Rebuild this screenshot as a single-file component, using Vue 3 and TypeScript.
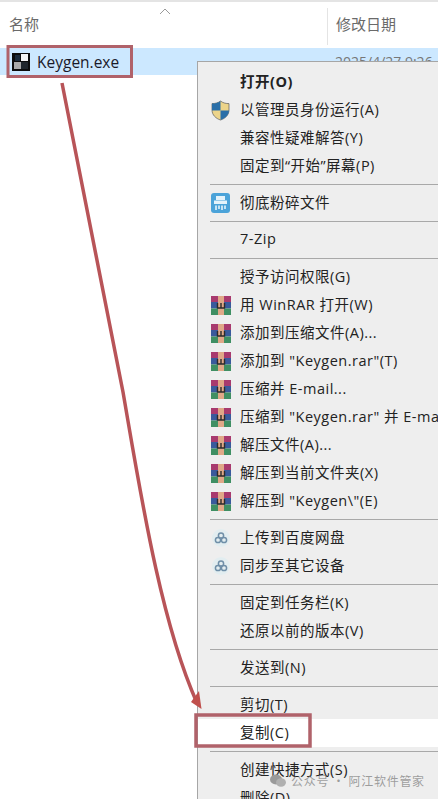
<script setup lang="ts">
type Icon = 'shield' | 'shred' | 'rar' | 'cloud' | ''

interface Row {
  label?: string
  icon?: Icon
  bold?: boolean
  active?: boolean
  sep?: boolean
}

const rows: Row[] = [
  { label: '打开(O)', bold: true },
  { label: '以管理员身份运行(A)', icon: 'shield' },
  { label: '兼容性疑难解答(Y)' },
  { label: '固定到“开始”屏幕(P)' },
  { sep: true },
  { label: '彻底粉碎文件', icon: 'shred' },
  { sep: true },
  { label: '7-Zip' },
  { sep: true },
  { label: '授予访问权限(G)' },
  { label: '用 WinRAR 打开(W)', icon: 'rar' },
  { label: '添加到压缩文件(A)...', icon: 'rar' },
  { label: '添加到 "Keygen.rar"(T)', icon: 'rar' },
  { label: '压缩并 E-mail...', icon: 'rar' },
  { label: '压缩到 "Keygen.rar" 并 E-mail', icon: 'rar' },
  { label: '解压文件(A)...', icon: 'rar' },
  { label: '解压到当前文件夹(X)', icon: 'rar' },
  { label: '解压到 "Keygen\\"(E)', icon: 'rar' },
  { sep: true },
  { label: '上传到百度网盘', icon: 'cloud' },
  { label: '同步至其它设备', icon: 'cloud' },
  { sep: true },
  { label: '固定到任务栏(K)' },
  { label: '还原以前的版本(V)' },
  { sep: true },
  { label: '发送到(N)' },
  { sep: true },
  { label: '剪切(T)' },
  { label: '复制(C)', active: true },
  { sep: true },
  { label: '创建快捷方式(S)' },
  { label: '删除(D)' },
]
</script>

<template>
  <div class="screen">
    <div class="topline"></div>
    <div class="header">
      <div class="col-name">
        <span>名称</span>
        <svg class="sort" width="12" height="7" viewBox="0 0 12 7">
          <path d="M1 6 L6 1 L11 6" fill="none" stroke="#9a9a9a" stroke-width="1" />
        </svg>
      </div>
      <div class="col-date">修改日期</div>
    </div>

    <div class="file-row">
      <svg class="exe" width="18" height="18" viewBox="0 0 18 18">
        <rect width="18" height="18" fill="#0c0c0c" />
        <rect x="9" y="1" width="7" height="7" fill="#f4f4f4" />
        <rect x="2" y="9" width="7" height="7" fill="#a9a9a9" />
        <rect x="9" y="9" width="7" height="7" fill="#20262c" />
        <rect x="3" y="2" width="5" height="6" fill="#1a2a3a" />
      </svg>
      <span class="file-name">Keygen.exe</span>
      <span class="file-date">2025/4/27 9:26</span>
    </div>

    <div class="menu">
      <template v-for="(row, i) in rows" :key="i">
        <div v-if="row.sep" class="sep"></div>
        <div v-else class="item" :class="{ bold: row.bold, active: row.active }">
          <span class="icon">
            <svg v-if="row.icon === 'shield'" width="19" height="21" viewBox="0 0 19 21">
              <path d="M9.5 1 C7 3 4 3.6 1 3.6 L1 10 C1 15 5 18.6 9.5 20 C14 18.6 18 15 18 10 L18 3.6 C15 3.6 12 3 9.5 1 Z" fill="#ecd48a" stroke="#5a5a5a" stroke-width="0.7" />
              <path d="M9.5 1 C7 3 4 3.6 1 3.6 L1 10.5 L9.5 10.5 Z" fill="#2a6fa8" />
              <path d="M9.5 10.5 L18 10.5 C18 15 14 18.6 9.5 20 Z" fill="#2a6fa8" />
            </svg>
            <svg v-else-if="row.icon === 'shred'" width="20" height="20" viewBox="0 0 20 20">
              <rect width="19" height="20" rx="3" fill="#4ba3d9" />
              <rect x="5" y="3" width="9" height="4" fill="#e4f3fb" />
              <rect x="3" y="7.5" width="13" height="3.5" fill="#e4f3fb" />
              <path d="M5 12.5 V17 M8 12.5 V16 M11 12.5 V17 M14 12.5 V16" stroke="#e4f3fb" stroke-width="1.6" />
            </svg>
            <svg v-else-if="row.icon === 'rar'" width="20" height="19" viewBox="0 0 20 19">
              <rect x="0" y="0" width="20" height="6" fill="#a83a6e" />
              <rect x="0" y="6" width="20" height="6.5" fill="#3a5a9c" />
              <rect x="0" y="12.5" width="20" height="6.5" fill="#3f8f63" />
              <rect x="7" y="0" width="6" height="19" fill="#e0a888" />
              <path d="M6.5 7 V12 H13.5 V7 M10 7 V12" fill="none" stroke="#2b2b2b" stroke-width="1.4" />
            </svg>
            <svg v-else-if="row.icon === 'cloud'" width="18" height="18" viewBox="0 0 18 18">
              <circle cx="9" cy="9" r="9" fill="#e2edf0" />
              <g fill="none" stroke="#6f8fa8" stroke-width="1.5">
                <circle cx="9" cy="6.5" r="2.6" />
                <circle cx="6" cy="11" r="2.6" />
                <circle cx="12" cy="11" r="2.6" />
              </g>
            </svg>
          </span>
          <span class="label">{{ row.label }}</span>
        </div>
      </template>
    </div>

    <svg class="annotations" width="438" height="799" viewBox="0 0 438 799">
      <rect x="8" y="46.5" width="123.5" height="30" fill="none" stroke="#b0626a" stroke-width="3" />
      <rect x="196" y="715" width="114" height="31" fill="none" stroke="#b0626a" stroke-width="3.5" />
      <path d="M62 83 L123 392 C 140 490, 160 620, 197 703" fill="none" stroke="#b85458" stroke-width="3.5" />
      <path d="M201.5 709 L191 702 L199 691 Z" fill="#c0504d" />
    </svg>

    <div class="watermark">
      <svg width="16" height="13" viewBox="0 0 16 13">
        <ellipse cx="6" cy="5.5" rx="6" ry="5" fill="#9a9a9a" />
        <ellipse cx="11" cy="8.5" rx="5" ry="4.2" fill="#b0b0b0" />
      </svg>
      <span>公众号 · 阿江软件管家</span>
    </div>
  </div>
</template>

<style scoped>
.screen {
  position: relative;
  width: 438px;
  height: 799px;
  overflow: hidden;
  background: #fff;
  font-family: "Open Sans", "Noto Sans CJK SC", sans-serif;
  color: #222;
}

.topline {
  height: 2px;
  background: #e4e4e4;
}

.header {
  display: flex;
  height: 46px;
  color: #6a6a6a;
  font-size: 15px;
  font-family: "Noto Sans CJK SC", sans-serif;
}

.col-name {
  position: relative;
  width: 327px;
  flex-shrink: 0;
  padding: 11px 0 0 9px;
  box-sizing: border-box;
  line-height: 22px;
}

.sort {
  position: absolute;
  left: 159px;
  top: 6px;
}

.col-date {
  height: 32px;
  margin-top: 6px;
  padding: 5px 0 0 8px;
  border-left: 1px solid #e4e4e4;
  line-height: 22px;
}

.file-row {
  display: flex;
  align-items: center;
  height: 27px;
  padding-left: 12px;
  background: #cce8ff;
}

.exe {
  flex-shrink: 0;
}

.file-name {
  width: 298px;
  flex-shrink: 0;
  margin-left: 7px;
  font-size: 15.5px;
  color: #1a1a2a;
}

.file-date {
  font-size: 14px;
  color: #777;
  white-space: nowrap;
}

.menu {
  position: absolute;
  left: 197px;
  top: 61px;
  width: 280px;
  padding-top: 6px;
  box-sizing: border-box;
  background: #eeeeee;
  border: 1px solid #a6a6a6;
  border-width: 1px 0 0 1px;
}

.item {
  display: flex;
  align-items: center;
  height: 28px;
  font-size: 14.5px;
  letter-spacing: 0.5px;
  white-space: nowrap;
}

.item.bold {
  font-weight: 700;
}

.item.active {
  background: #fff;
}

.icon {
  display: flex;
  align-items: center;
  justify-content: center;
  width: 42px;
  flex-shrink: 0;
  padding-left: 3px;
  box-sizing: border-box;
}

.label {
  padding-bottom: 3px;
}

.sep {
  height: 9px;
  padding-top: 4px;
  box-sizing: border-box;
  margin-left: 12px;
}

.sep::before {
  content: "";
  display: block;
  height: 1px;
  background: #a8a8a8;
}

.annotations {
  position: absolute;
  left: 0;
  top: 0;
  pointer-events: none;
}

.watermark {
  position: absolute;
  left: 270px;
  top: 772px;
  display: flex;
  align-items: center;
  gap: 5px;
  font-family: "Noto Sans CJK SC", sans-serif;
  font-size: 12px;
  letter-spacing: 0.7px;
  color: rgba(120, 120, 120, 0.7);
  white-space: nowrap;
}
</style>
